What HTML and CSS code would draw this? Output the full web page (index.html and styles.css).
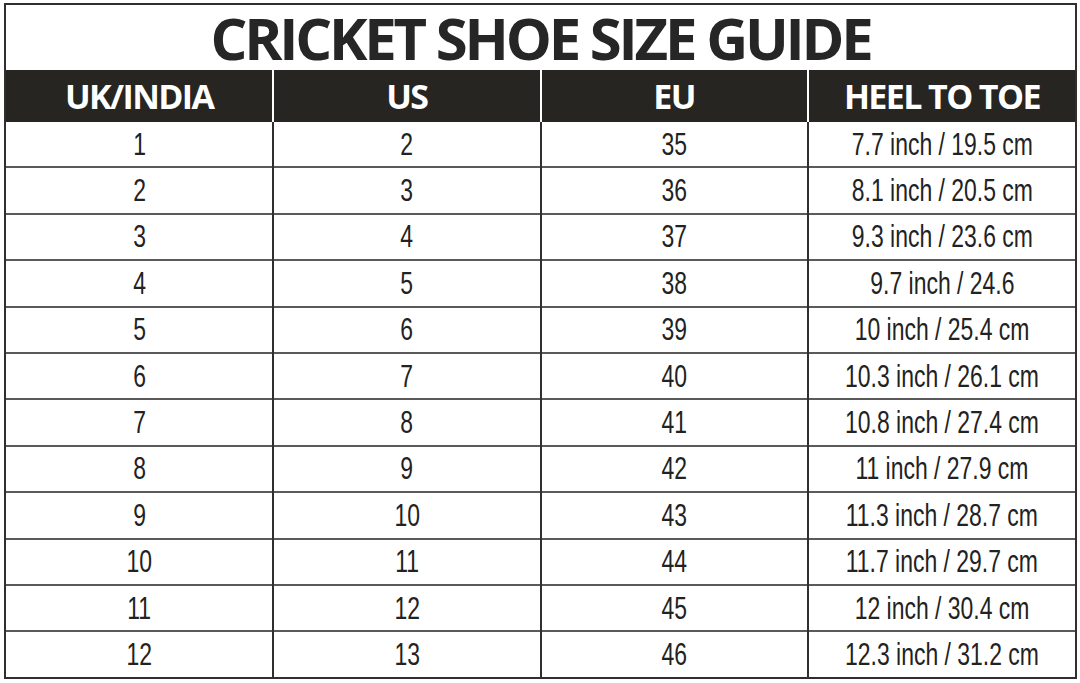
FILE: index.html
```html
<!DOCTYPE html>
<html>
<head>
<meta charset="utf-8">
<link rel="stylesheet" href="styles.css">
</head>
<body>
<div class="sheet">
  <h1 class="title">CRICKET SHOE SIZE GUIDE</h1>
  <table class="sizes">
    <thead>
      <tr><th>UK/INDIA</th><th>US</th><th>EU</th><th>HEEL TO TOE</th></tr>
    </thead>
    <tbody>
      <tr><td><span>1</span></td><td><span>2</span></td><td><span>35</span></td><td><span>7.7 inch / 19.5 cm</span></td></tr>
      <tr><td><span>2</span></td><td><span>3</span></td><td><span>36</span></td><td><span>8.1 inch / 20.5 cm</span></td></tr>
      <tr><td><span>3</span></td><td><span>4</span></td><td><span>37</span></td><td><span>9.3 inch / 23.6 cm</span></td></tr>
      <tr><td><span>4</span></td><td><span>5</span></td><td><span>38</span></td><td><span>9.7 inch / 24.6</span></td></tr>
      <tr><td><span>5</span></td><td><span>6</span></td><td><span>39</span></td><td><span>10 inch / 25.4 cm</span></td></tr>
      <tr><td><span>6</span></td><td><span>7</span></td><td><span>40</span></td><td><span>10.3 inch / 26.1 cm</span></td></tr>
      <tr><td><span>7</span></td><td><span>8</span></td><td><span>41</span></td><td><span>10.8 inch / 27.4 cm</span></td></tr>
      <tr><td><span>8</span></td><td><span>9</span></td><td><span>42</span></td><td><span>11 inch / 27.9 cm</span></td></tr>
      <tr><td><span>9</span></td><td><span>10</span></td><td><span>43</span></td><td><span>11.3 inch / 28.7 cm</span></td></tr>
      <tr><td><span>10</span></td><td><span>11</span></td><td><span>44</span></td><td><span>11.7 inch / 29.7 cm</span></td></tr>
      <tr><td><span>11</span></td><td><span>12</span></td><td><span>45</span></td><td><span>12 inch / 30.4 cm</span></td></tr>
      <tr><td><span>12</span></td><td><span>13</span></td><td><span>46</span></td><td><span>12.3 inch / 31.2 cm</span></td></tr>
    </tbody>
  </table>
</div>
</body>
</html>
```
FILE: styles.css
```css
html, body {
  margin: 0;
  padding: 0;
  background: #ffffff;
}
.sheet {
  margin: 3px 3px 0 4px;
  width: 1069px;
  border: 2px solid #2f2f2f;
  display: flex;
  flex-direction: column;
}
.title {
  margin: 0;
  height: 65px;
  display: flex;
  align-items: center;
  justify-content: center;
  font-family: "Open Sans", sans-serif;
  font-weight: 700;
  font-size: 58px;
  letter-spacing: -3.2px;
  color: #262626;
  line-height: 65px;
}
.sizes {
  width: 100%;
  border-collapse: collapse;
  table-layout: fixed;
}
.sizes th {
  height: 52px;
  padding: 0;
  background: #262522;
  color: #ffffff;
  font-family: "Open Sans", sans-serif;
  font-weight: 700;
  font-size: 34px;
  letter-spacing: -1.6px;
  border-left: 2px solid #ffffff;
}
.sizes th:first-child {
  border-left: none;
}
.sizes td {
  height: 44.4px;
  padding: 0;
  text-align: center;
  font-family: "Liberation Sans", sans-serif;
  font-size: 31px;
  line-height: 1;
  color: #222222;
  border-top: 2px solid #5a5a5a;
  border-left: 2px solid #2f2f2f;
  white-space: nowrap;
}
.sizes td span {
  display: inline-block;
  transform: scaleX(0.74);
}
.sizes tbody tr:first-child td {
  border-top: none;
}
.sizes td:first-child {
  border-left: none;
}
```
